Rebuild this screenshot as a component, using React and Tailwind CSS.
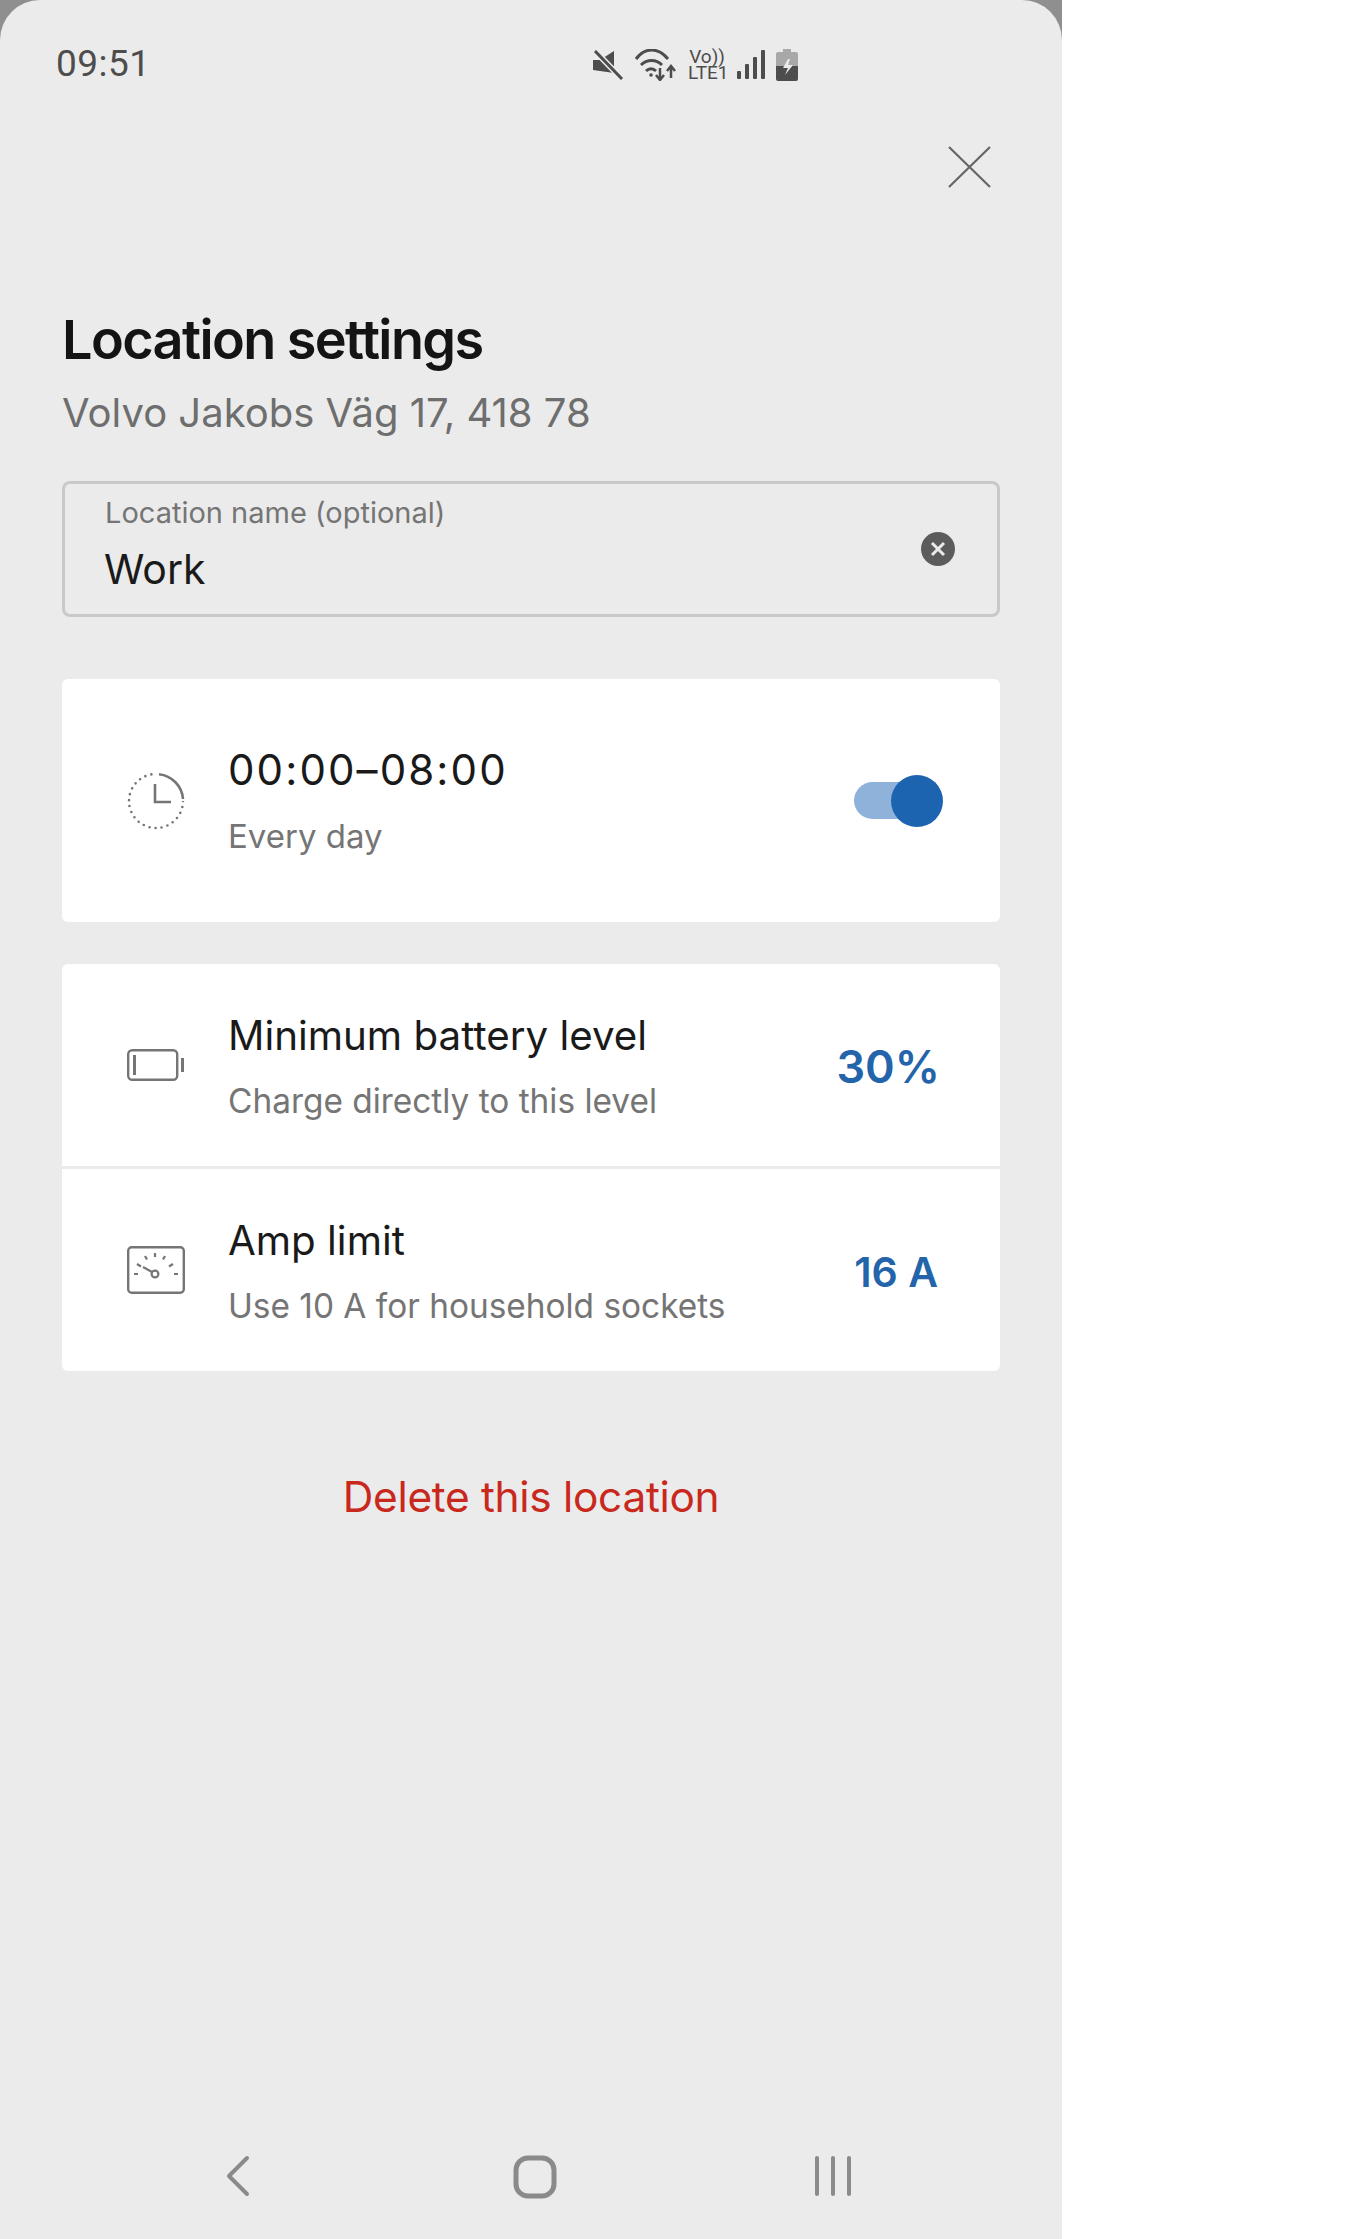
import React from 'react'

const Mute = () => (
  <svg width="32" height="30" viewBox="0 0 32 30" className="shrink-0">
    <path d="M1 10h7l14-9v22L1 20z" fill="#4d4d4d" />
    <path d="M3 1l27 28" stroke="#ebebeb" strokeWidth="6" />
    <path d="M3 1l27 28" stroke="#4d4d4d" strokeWidth="3" />
  </svg>
)

const Wifi = () => (
  <svg width="42" height="32" viewBox="0 0 42 32" className="shrink-0" fill="none" stroke="#4d4d4d" strokeWidth="3">
    <path d="M1 10C10 -2 23 -2 33 10" />
    <path d="M6 16c6-6 15-6 21 0" />
    <path d="M11 22c3-3 7-3 10 0" />
    <circle cx="16" cy="26" r="1.800" fill="#4d4d4d" stroke="none" />
    <path d="M25 19v11M21 26l4 5 4-5" strokeWidth="2.500" />
    <path d="M36 29V18M32 22l4-5 4 5" strokeWidth="2.500" />
  </svg>
)

const Signal = () => (
  <svg width="28" height="30" viewBox="0 0 28 30" className="shrink-0" fill="#4d4d4d">
    <rect x="0" y="21" width="4" height="8" rx="1" />
    <rect x="8" y="14" width="4" height="15" rx="1" />
    <rect x="16" y="7" width="4" height="22" rx="1" />
    <rect x="24" y="0" width="4" height="29" rx="1" />
  </svg>
)

const Battery = () => (
  <svg width="22" height="32" viewBox="0 0 22 32" className="shrink-0">
    <path d="M7 0h8v3h5a2 2 0 0 1 2 2v12H0V5a2 2 0 0 1 2-2h5z" fill="#a8a8a8" />
    <path d="M0 17h22v13a2 2 0 0 1-2 2H2a2 2 0 0 1-2-2z" fill="#4d4d4d" />
    <path d="M12 10l-5 9h5l-3 7 8-10h-5l2-6z" fill="#ebebeb" />
  </svg>
)

const Clock = () => (
  <svg width="60" height="60" viewBox="0 0 60 60" fill="none" stroke="#757575" className="shrink-0">
    <circle cx="30" cy="30" r="27" strokeWidth="2.600" strokeLinecap="round" strokeDasharray="0 6.1" />
    <path d="M30 3a27 27 0 0 1 27 27" stroke="#ffffff" strokeWidth="6" />
    <path d="M33 3.200A27 27 0 0 1 57 28" strokeWidth="2.600" />
    <path d="M29 13v18h16" strokeWidth="2.600" />
  </svg>
)

const BatteryLow = () => (
  <svg width="58" height="32" viewBox="0 0 58 32" fill="none" stroke="#757575" className="shrink-0">
    <rect x="1.200" y="1.200" width="49" height="29.600" rx="4" strokeWidth="2.400" />
    <rect x="6" y="6" width="3" height="20" fill="#757575" stroke="none" />
    <rect x="54" y="9" width="3" height="14" fill="#757575" stroke="none" />
  </svg>
)

const Gauge = () => (
  <svg width="58" height="48" viewBox="0 0 58 48" fill="none" stroke="#757575" strokeWidth="2.200" className="shrink-0">
    <rect x="1.200" y="1.200" width="55.600" height="45.600" rx="3.500" strokeWidth="2.400" />
    <circle cx="28" cy="28" r="3.400" />
    <path d="M25 26l-9-5" />
    <path d="M7 28h4M10 18l4 2.500M18 10l2 3.500M28 7v4M38 10l-2 3.500M46 18l-4 2.500M47 28h4" />
  </svg>
)

const Row = ({ icon, title, sub, value, valueClass }) => (
  <div className="flex h-[202px] items-center">
    <div className="flex w-[166px] shrink-0 pl-[65px]">{icon}</div>
    <div className="flex min-w-0 flex-1 flex-col gap-[21px] pt-[6px]">
      <div className="text-[40.300px] leading-[44px] text-[#1a1a1a]">{title}</div>
      <div className="text-[33.400px] leading-[44px] text-[#757575]">{sub}</div>
    </div>
    <div className={`mt-[3px] font-semibold text-[#2364aa] ${valueClass}`}>{value}</div>
  </div>
)

export default function App() {
  return (
    <div className="flex h-[2239px] w-[1366px] bg-white font-['Inter',sans-serif]">
      <div className="h-full w-[1062px] bg-[#8f8f8f]">
        <div className="flex h-full flex-col rounded-t-[40px] bg-[#ebebeb]">
          <div className="flex h-[146px] items-start pt-[44px] pl-[56px]">
            <span className="w-[91px] font-['Roboto',sans-serif] text-[37px] leading-[40px] tracking-[0.5px] text-[#4d4d4d]">09:51</span>
            <div className="ml-[445px] flex items-center gap-[11px] pt-[5px]">
              <Mute />
              <Wifi />
              <div className="w-[38px] shrink-0 text-center font-['Roboto',sans-serif] text-[19px] leading-[16px] whitespace-nowrap text-[#4d4d4d]">
                Vo))
                <br />
                LTE1
              </div>
              <Signal />
              <Battery />
            </div>
          </div>

          <div className="flex justify-end pr-[71px]">
            <svg width="43" height="42" viewBox="0 0 43 42" stroke="#666666" strokeWidth="2.200" fill="none">
              <path d="M1 1l41 40M42 1L1 41" />
            </svg>
          </div>

          <div className="flex flex-1 flex-col px-[62px]">
            <h1 className="mt-[121px] text-[54px] leading-[62px] font-semibold tracking-[-1.600px] text-[#141414]">Location settings</h1>
            <p className="mt-[17px] text-[40px] leading-[50px] text-[#6e6e6e]">Volvo Jakobs Väg 17, 418 78</p>

            <div className="mt-[43px] flex h-[136px] items-center rounded-[8px] border-[3px] border-[#c9c9c9] pr-[42px] pl-[40px]">
              <div className="flex flex-1 flex-col">
                <span className="text-[29px] leading-[34px] text-[#757575]">Location name (optional)</span>
                <span className="mt-[15px] -ml-[1px] text-[41px] leading-[48px] text-[#1a1a1a]">Work</span>
                <span className="h-[9px]" />
              </div>
              <svg width="34" height="34" viewBox="0 0 34 34" className="shrink-0">
                <circle cx="17" cy="17" r="17" fill="#5c5c5c" />
                <path d="M11 11l12 12M23 11L11 23" stroke="#ebebeb" strokeWidth="3" />
              </svg>
            </div>

            <div className="mt-[62px] flex h-[243px] items-center rounded-[6px] bg-white">
              <div className="flex w-[166px] shrink-0 pl-[64px]">
                <Clock />
              </div>
              <div className="flex flex-1 flex-col gap-[20px] pt-[3px]">
                <div className="text-[42px] leading-[48px] tracking-[2.100px] text-[#1a1a1a]">00:00–08:00</div>
                <div className="text-[33px] leading-[44px] text-[#757575]">Every day</div>
              </div>
              <div className="relative mr-[58px] h-[37px] w-[88px] rounded-full bg-[#8fb2da]">
                <div className="absolute top-[-7px] right-[-1px] h-[52px] w-[52px] rounded-full bg-[#1c64b0]" />
              </div>
            </div>

            <div className="mt-[42px] flex flex-col rounded-[6px] bg-white">
              <Row icon={<BatteryLow />} title="Minimum battery level" sub="Charge directly to this level" value="30%" valueClass="pr-[60px] text-[45px] leading-[56px]" />
              <div className="h-[3px] bg-[#ebebeb]" />
              <Row icon={<Gauge />} title="Amp limit" sub="Use 10 A for household sockets" value="16 A" valueClass="pr-[62px] text-[41px] leading-[56px]" />
            </div>

            <div className="mt-[97px] text-center text-[42.400px] leading-[58px] tracking-[-0.300px] text-[#c9281c]">Delete this location</div>
          </div>

          <div className="flex h-[84px] items-start pl-[226px]">
            <svg width="24" height="42" viewBox="0 0 24 42" fill="none" stroke="#8a8a8a" strokeWidth="4" strokeLinecap="round" strokeLinejoin="round">
              <path d="M21 3L3 21l18 18" />
            </svg>
            <svg width="44" height="44" viewBox="0 0 44 44" fill="none" stroke="#8a8a8a" strokeWidth="5" className="ml-[263px]">
              <rect x="3" y="3" width="38" height="38" rx="12" />
            </svg>
            <svg width="38" height="42" viewBox="0 0 38 42" fill="none" stroke="#8a8a8a" strokeWidth="4" strokeLinecap="round" className="ml-[257px]">
              <path d="M3 3v36M19 3v36M35 3v36" />
            </svg>
          </div>
        </div>
      </div>
    </div>
  )
}
